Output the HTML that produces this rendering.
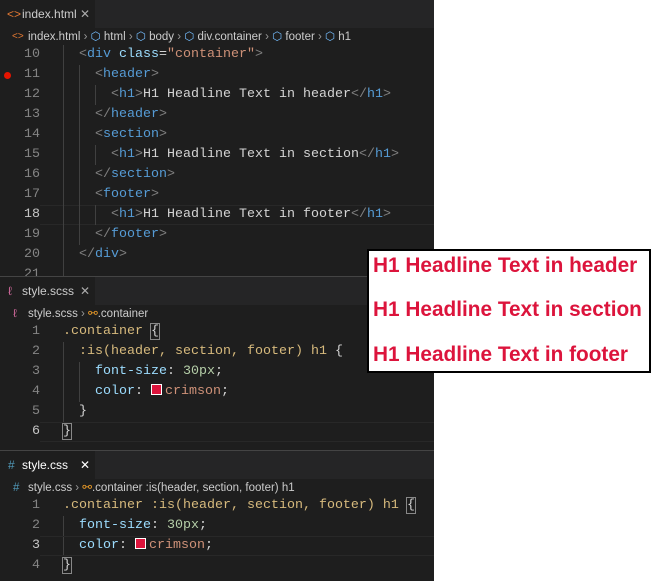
<!DOCTYPE html>
<html><head><meta charset="utf-8"><style>
*{margin:0;padding:0;box-sizing:border-box}
body{width:654px;height:581px;background:#fff;position:relative;overflow:hidden;font-family:"Liberation Sans",sans-serif}
.ed{position:absolute;left:0;width:434px;background:#1e1e1e}
.tabs{position:absolute;left:0;width:434px;height:28px;background:#252526}
.tab{position:absolute;left:0;top:0;height:28px;width:95px;background:#1e1e1e;color:#ccc;font-size:12px;line-height:28px;padding-left:22px}
.tab .x{position:absolute;left:80px;color:#aaa}
.bc{position:absolute;left:0;width:434px;height:18px;color:#ccc;font-size:11.5px;line-height:18px;padding-left:28px;white-space:nowrap}
.ln{position:absolute;width:40px;text-align:right;font-family:"Liberation Mono",monospace;font-size:13.33px;color:#858585;line-height:20px}
.cd{position:absolute;left:63px;font-family:"Liberation Mono",monospace;font-size:13.33px;color:#d4d4d4;line-height:20px;white-space:pre}
.cur{color:#c6c6c6}
.b{color:#808080}.t{color:#569cd6}.a{color:#9cdcfe}.s{color:#ce9178}.y{color:#d7ba7d}.n{color:#b5cea8}
.sw{display:inline-block;width:11px;height:11px;background:crimson;border:1px solid #fff;margin-right:3px;vertical-align:-1px}
.br{outline:1px solid #888}
.guide{position:absolute;width:1px;background:#404040}
.hl{position:absolute;left:40px;width:394px;height:20px;border-top:1px solid #282828;border-bottom:1px solid #282828}
.box{position:absolute;left:367px;top:249px;width:284px;height:124px;background:#fff;border:2px solid #000}
.box div{position:absolute;left:4px;color:crimson;font-weight:bold;font-size:20.8px;white-space:nowrap}
</style></head><body>
<div class="ed" style="top:0;height:277px"></div>
<div class="tabs" style="top:0"><div class="tab"><span style="position:absolute;left:7px;color:#e37933">&lt;&gt;</span>index.html<span class="x">✕</span></div></div>
<div class="bc" style="top:28px"><span style="position:absolute;left:12px;color:#e37933;font-size:10px">&lt;&gt;</span>index.html <span style="color:#999">›</span> <span style="color:#75beff">⬡</span> html <span style="color:#999">›</span> <span style="color:#75beff">⬡</span> body <span style="color:#999">›</span> <span style="color:#75beff">⬡</span> div.container <span style="color:#999">›</span> <span style="color:#75beff">⬡</span> footer <span style="color:#999">›</span> <span style="color:#75beff">⬡</span> h1</div>
<div style="position:absolute;left:4px;top:72px;width:7px;height:7px;border-radius:50%;background:#e51400"></div>
<div class="hl" style="top:205px"></div>
<div class="guide" style="left:63px;top:45px;height:232px"></div>
<div class="guide" style="left:79px;top:65px;height:180px"></div>
<div class="guide" style="left:95px;top:85px;height:20px"></div>
<div class="guide" style="left:95px;top:145px;height:20px"></div>
<div class="guide" style="left:95px;top:205px;height:20px"></div>
<div class="ln" style="top:45px">10</div><div class="cd" style="top:45px">  <span class="b">&lt;</span><span class="t">div</span> <span class="a">class</span>=<span class="s">"container"</span><span class="b">&gt;</span></div>
<div class="ln" style="top:65px">11</div><div class="cd" style="top:65px">    <span class="b">&lt;</span><span class="t">header</span><span class="b">&gt;</span></div>
<div class="ln" style="top:85px">12</div><div class="cd" style="top:85px">      <span class="b">&lt;</span><span class="t">h1</span><span class="b">&gt;</span>H1 Headline Text in header<span class="b">&lt;/</span><span class="t">h1</span><span class="b">&gt;</span></div>
<div class="ln" style="top:105px">13</div><div class="cd" style="top:105px">    <span class="b">&lt;/</span><span class="t">header</span><span class="b">&gt;</span></div>
<div class="ln" style="top:125px">14</div><div class="cd" style="top:125px">    <span class="b">&lt;</span><span class="t">section</span><span class="b">&gt;</span></div>
<div class="ln" style="top:145px">15</div><div class="cd" style="top:145px">      <span class="b">&lt;</span><span class="t">h1</span><span class="b">&gt;</span>H1 Headline Text in section<span class="b">&lt;/</span><span class="t">h1</span><span class="b">&gt;</span></div>
<div class="ln" style="top:165px">16</div><div class="cd" style="top:165px">    <span class="b">&lt;/</span><span class="t">section</span><span class="b">&gt;</span></div>
<div class="ln" style="top:185px">17</div><div class="cd" style="top:185px">    <span class="b">&lt;</span><span class="t">footer</span><span class="b">&gt;</span></div>
<div class="ln cur" style="top:205px">18</div><div class="cd" style="top:205px">      <span class="b">&lt;</span><span class="t">h1</span><span class="b">&gt;</span>H1 Headline Text in footer<span class="b">&lt;/</span><span class="t">h1</span><span class="b">&gt;</span></div>
<div class="ln" style="top:225px">19</div><div class="cd" style="top:225px">    <span class="b">&lt;/</span><span class="t">footer</span><span class="b">&gt;</span></div>
<div class="ln" style="top:245px">20</div><div class="cd" style="top:245px">  <span class="b">&lt;/</span><span class="t">div</span><span class="b">&gt;</span></div>
<div class="ln" style="top:265px;height:11px;overflow:hidden">21</div>
<div style="position:absolute;left:0;top:276px;width:434px;height:1px;background:#444"></div>

<div class="ed" style="top:277px;height:174px"></div>
<div class="tabs" style="top:277px"><div class="tab"><span style="position:absolute;left:8px;color:#cd6799">ℓ</span>style.scss<span class="x">✕</span></div></div>
<div class="bc" style="top:305px"><span style="position:absolute;left:13px;color:#cd6799">ℓ</span>style.scss <span style="color:#999">›</span> <span style="color:#ee9d28">⚯</span>.container</div>
<div class="guide" style="left:63px;top:342px;height:80px"></div>
<div class="guide" style="left:79px;top:362px;height:40px"></div>
<div class="hl" style="top:422px"></div>
<div class="ln" style="top:322px">1</div><div class="cd" style="top:322px"><span class="y">.container</span> <span class="br">{</span></div>
<div class="ln" style="top:342px">2</div><div class="cd" style="top:342px">  <span class="y">:is(header, section, footer) h1</span> {</div>
<div class="ln" style="top:362px">3</div><div class="cd" style="top:362px">    <span class="a">font-size</span>: <span class="n">30px</span>;</div>
<div class="ln" style="top:382px">4</div><div class="cd" style="top:382px">    <span class="a">color</span>: <span class="sw"></span><span class="s">crimson</span>;</div>
<div class="ln" style="top:402px">5</div><div class="cd" style="top:402px">  }</div>
<div class="ln cur" style="top:422px">6</div><div class="cd" style="top:422px"><span class="br">}</span></div>
<div style="position:absolute;left:0;top:450px;width:434px;height:1px;background:#444"></div>

<div class="ed" style="top:451px;height:130px"></div>
<div class="tabs" style="top:451px"><div class="tab" style="color:#fff"><span style="position:absolute;left:8px;color:#519aba">#</span>style.css<span class="x" style="color:#fff">✕</span></div></div>
<div class="bc" style="top:479px"><span style="position:absolute;left:13px;color:#519aba">#</span>style.css <span style="color:#999">›</span> <span style="color:#ee9d28">⚯</span>.container :is(header, section, footer) h1</div>
<div class="guide" style="left:63px;top:516px;height:40px"></div>
<div class="hl" style="top:536px"></div>
<div class="ln" style="top:496px">1</div><div class="cd" style="top:496px"><span class="y">.container :is(header, section, footer) h1</span> <span class="br">{</span></div>
<div class="ln" style="top:516px">2</div><div class="cd" style="top:516px">  <span class="a">font-size</span>: <span class="n">30px</span>;</div>
<div class="ln cur" style="top:536px">3</div><div class="cd" style="top:536px">  <span class="a">color</span>: <span class="sw"></span><span class="s">crimson</span>;</div>
<div class="ln" style="top:556px">4</div><div class="cd" style="top:556px"><span class="br">}</span></div>

<div class="box">
<div style="top:3px">H1 Headline Text in header</div>
<div style="top:47px">H1 Headline Text in section</div>
<div style="top:92px">H1 Headline Text in footer</div>
</div>
</body></html>
